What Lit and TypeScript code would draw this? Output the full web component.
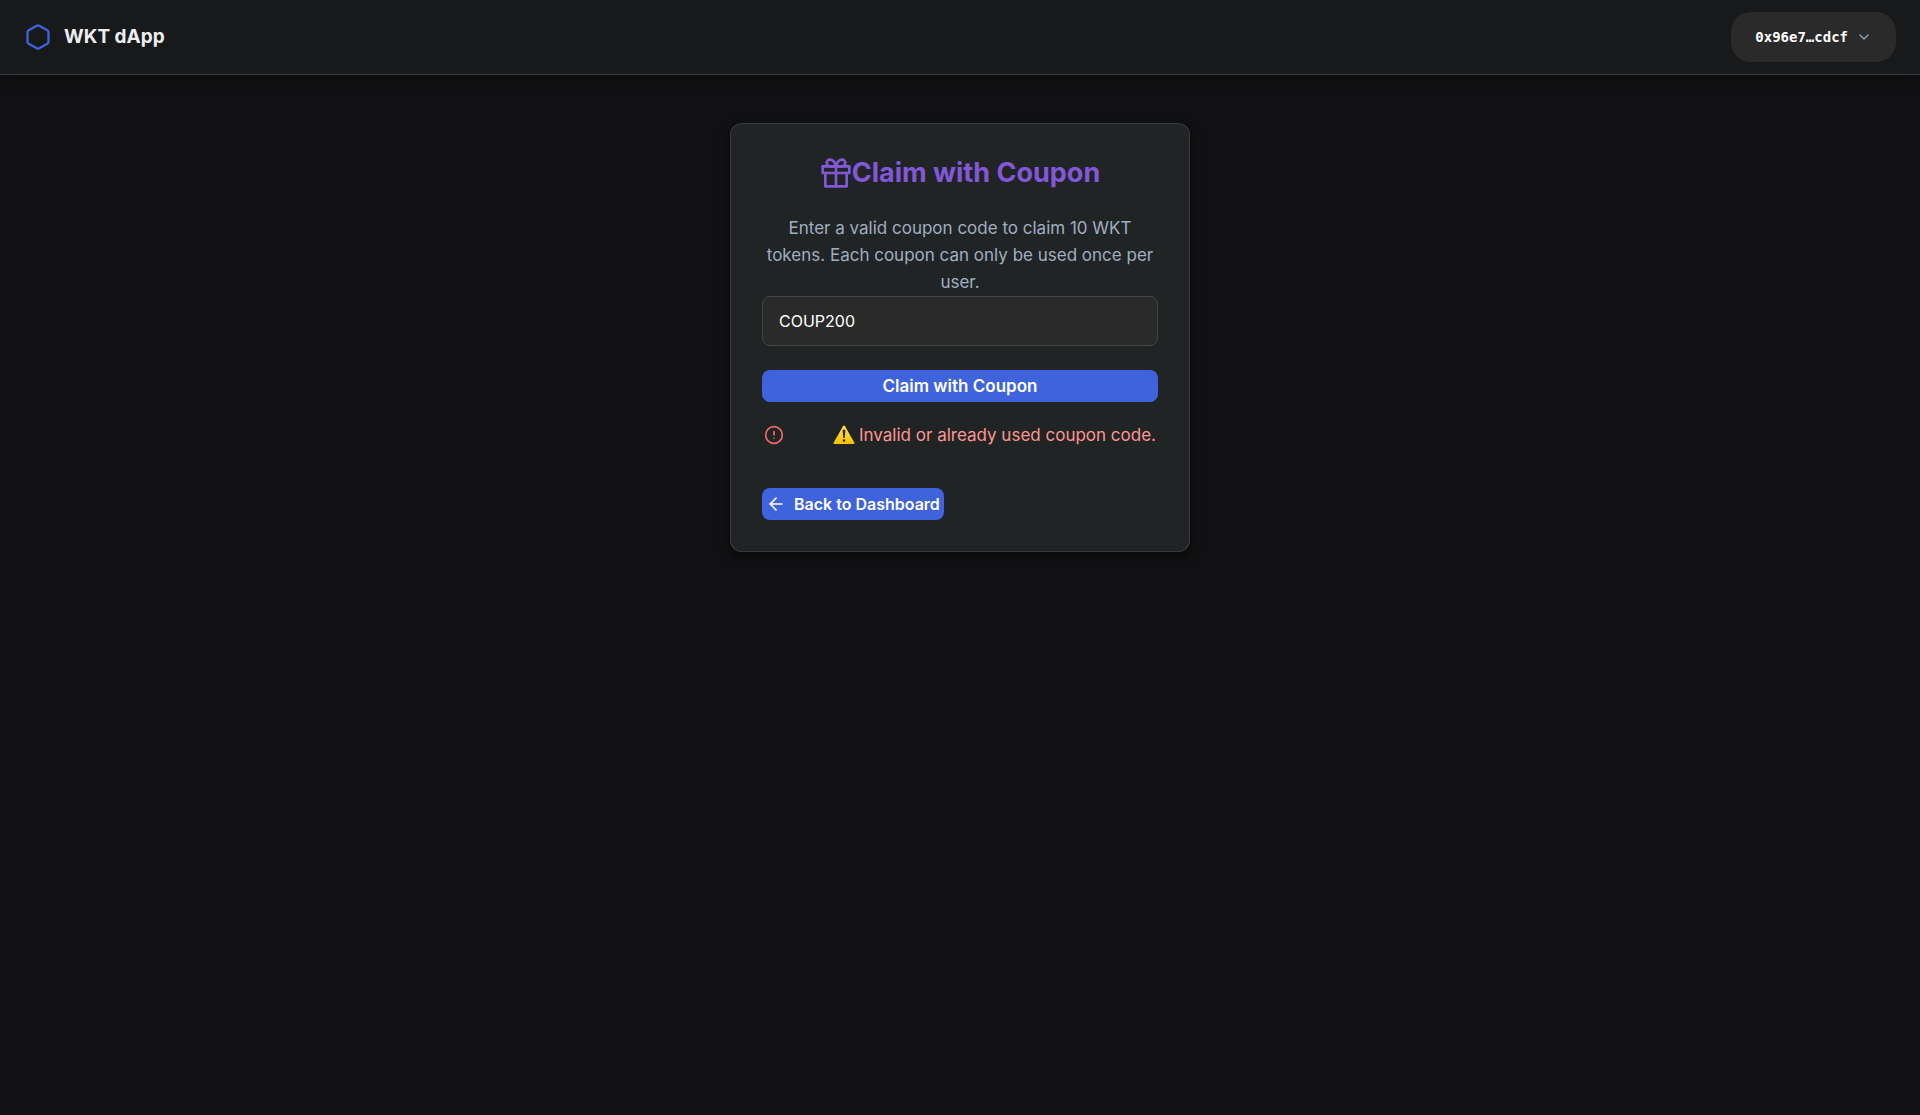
import { LitElement, html, css, svg } from "lit";
import { customElement, state } from "lit/decorators.js";

const hexagonIcon = svg`<path d="M21 16V8a2 2 0 0 0-1-1.73l-7-4a2 2 0 0 0-2 0l-7 4A2 2 0 0 0 3 8v8a2 2 0 0 0 1 1.73l7 4a2 2 0 0 0 2 0l7-4A2 2 0 0 0 21 16z"/>`;
const chevronIcon = svg`<polyline points="6 9 12 15 18 9"/>`;
const giftIcon = svg`<polyline points="20 12 20 22 4 22 4 12"/><rect x="2" y="7" width="20" height="5"/><line x1="12" y1="22" x2="12" y2="7"/><path d="M12 7H7.5a2.5 2.5 0 0 1 0-5C11 2 12 7 12 7z"/><path d="M12 7h4.5a2.5 2.5 0 0 0 0-5C13 2 12 7 12 7z"/>`;
const alertIcon = svg`<circle cx="12" cy="12" r="10"/><line x1="12" y1="8" x2="12" y2="12"/><line x1="12" y1="16" x2="12.01" y2="16"/>`;
const arrowIcon = svg`<line x1="19" y1="12" x2="5" y2="12"/><polyline points="12 19 5 12 12 5"/>`;

const icon = (name: string, size: number, shape: unknown) => html`
  <svg class="icon ${name}" width=${size} height=${size} viewBox="0 0 24 24" aria-hidden="true">${shape}</svg>
`;

@customElement("app-root")
export class AppRoot extends LitElement {
  static styles = css`
    :host {
      display: flex;
      flex-direction: column;
      min-height: 100vh;
      background: #111113;
      color: #edeef0;
      font-family: Inter, "Liberation Sans", sans-serif;
    }
    * {
      box-sizing: border-box;
    }
    button,
    input {
      font: inherit;
      border: 0;
      margin: 0;
    }
    button {
      cursor: pointer;
    }
    .icon {
      flex: none;
      fill: none;
      stroke: currentColor;
      stroke-width: 2;
      stroke-linecap: round;
      stroke-linejoin: round;
    }
    .header {
      display: flex;
      align-items: center;
      justify-content: space-between;
      padding: 12px 24px;
      background: #18191b;
      border-bottom: 1px solid #3a3c3f;
      box-shadow: 0 2px 12px rgba(0, 0, 0, 0.4);
    }
    .brand {
      display: flex;
      align-items: center;
      gap: 12px;
      color: inherit;
      text-decoration: none;
      font-size: 19px;
      line-height: 28px;
      font-weight: 700;
    }
    .hexagon {
      color: #3e63dd;
    }
    .account {
      display: flex;
      align-items: center;
      gap: 8px;
      height: 50px;
      padding: 0 24px;
      border-radius: 20px;
      background: #2a2a2a;
      color: #fff;
      font-family: "DejaVu Sans Mono", monospace;
      font-size: 14px;
      font-weight: 700;
    }
    .chevron {
      color: #8fa3b8;
    }
    .main {
      display: flex;
      justify-content: center;
      padding: 48px 24px;
    }
    .card {
      width: 100%;
      max-width: 460px;
      padding: 32px;
      border-radius: 12px;
      background: #212425;
      box-shadow: inset 0 0 0 1px #363a3c, 0 4px 12px rgba(0, 0, 0, 0.5);
    }
    .title {
      display: flex;
      align-items: center;
      justify-content: center;
      margin: 0 0 24px;
      color: #8358d8;
      font-size: 27px;
      line-height: 36px;
      font-weight: 700;
    }
    .lead {
      margin: 0;
      color: #a0aec0;
      font-size: 17px;
      line-height: 27px;
      text-align: center;
    }
    .form {
      display: flex;
      flex-direction: column;
      gap: 24px;
    }
    .code {
      width: 100%;
      height: 50px;
      padding: 0 16px;
      border: 1px solid #444;
      border-radius: 8px;
      background: #2a2a2a;
      color: #fff;
      font-size: 16px;
      outline: none;
    }
    .primary {
      height: 32px;
      border-radius: 8px;
      background: #3e63dd;
      color: #fff;
      font-size: 17px;
      font-weight: 600;
    }
    .error {
      display: flex;
      align-items: center;
      justify-content: space-between;
      padding: 20px 2px 40px;
      color: #ff9592;
      font-size: 17px;
      line-height: 26px;
    }
    .alert {
      color: #f16a6a;
    }
    .message {
      display: flex;
      align-items: center;
      gap: 4px;
    }
    .back {
      display: flex;
      align-items: center;
      gap: 8px;
      width: fit-content;
      padding: 0 4px;
      font-size: 16px;
    }
  `;

  @state() private code = "COUP200";

  private onInput(event: Event) {
    this.code = (event.target as HTMLInputElement).value;
  }

  render() {
    return html`
      <header class="header">
        <a class="brand" href="#">${icon("hexagon", 28, hexagonIcon)}<span>WKT dApp</span></a>
        <button class="account" type="button"><span>0x96e7…cdcf</span>${icon("chevron", 16, chevronIcon)}</button>
      </header>
      <main class="main">
        <section class="card">
          <h1 class="title">${icon("gift", 32, giftIcon)}<span>Claim with Coupon</span></h1>
          <p class="lead" id="lead">
            Enter a valid coupon code to claim 10 WKT tokens. Each coupon can only be used once per user.
          </p>
          <form class="form" @submit=${(event: Event) => event.preventDefault()}>
            <input class="code" type="text" aria-labelledby="lead" .value=${this.code} @input=${this.onInput} />
            <button class="primary" type="submit">Claim with Coupon</button>
          </form>
          <div class="error" role="alert">
            ${icon("alert", 20, alertIcon)}
            <span class="message">
              <svg width="22" height="20" viewBox="0 0 22 20" aria-hidden="true">
                <defs>
                  <linearGradient id="sign" x1="0" y1="0" x2="0" y2="1">
                    <stop offset="0" stop-color="#ffe04a" />
                    <stop offset="1" stop-color="#fcc200" />
                  </linearGradient>
                </defs>
                <path d="M10 1.2Q11 -0.2 12 1.2L21.3 17.6Q21.8 19 20.6 19H1.4Q0.2 19 0.7 17.6Z" fill="url(#sign)" />
                <path d="M9.7 5.6Q9.7 4.4 11 4.4T12.3 5.6L11.8 12.4Q11.7 13.1 11 13.1T10.2 12.4Z" fill="#2b2610" />
                <circle cx="11" cy="15.6" r="1.3" fill="#2b2610" />
              </svg>
              <span>Invalid or already used coupon code.</span>
            </span>
          </div>
          <button class="primary back" type="button">${icon("arrow", 20, arrowIcon)}<span>Back to Dashboard</span></button>
        </section>
      </main>
    `;
  }
}
